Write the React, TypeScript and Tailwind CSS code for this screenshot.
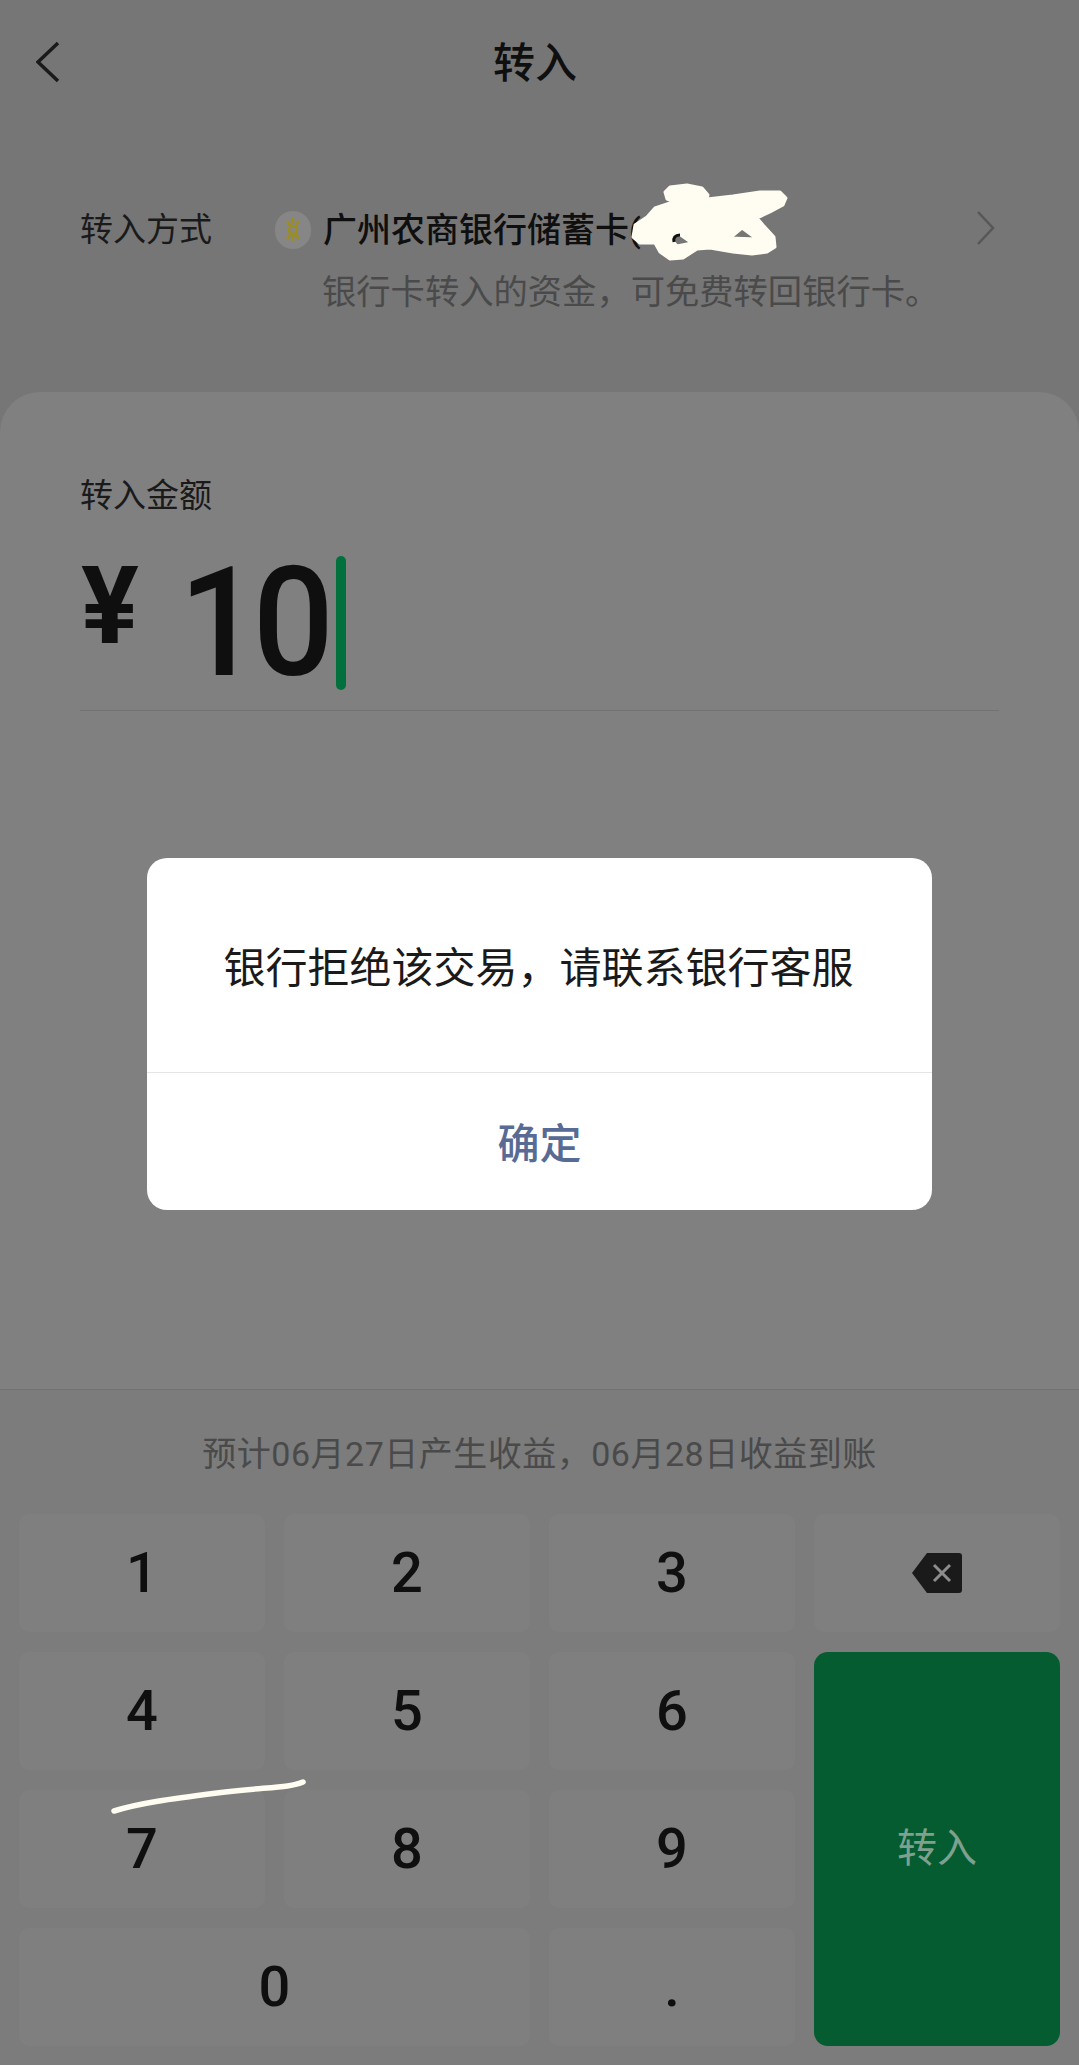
const font = 'font-[Roboto,"Noto_Sans_CJK_SC",sans-serif]';

function Key({ label, className = '' }: { label: string; className?: string }) {
  return (
    <button className={`flex items-center justify-center rounded-[10px] bg-[#7f7f7f] text-[56px] font-medium leading-none text-[#0f0f0f] ${className}`}>
      {label}
    </button>
  );
}

function BankLogo() {
  return (
    <span className="flex h-[38px] w-[36px] shrink-0 items-center justify-center rounded-full bg-[#868686]">
      <svg viewBox="0 0 16 26" className="h-[26px] w-[16px]" fill="none" stroke="#9c8d22" strokeWidth="2.6">
        <circle cx="8" cy="13" r="4" />
        <path d="M8 1v6M8 19v6M2 4l3.5 5M14 4l-3.5 5M2 22l3.5-5M14 22l-3.5-5" />
      </svg>
    </span>
  );
}

function BackspaceIcon() {
  return (
    <svg viewBox="0 0 50 40" className="h-[40px] w-[50px]">
      <path d="M15 0H47a3 3 0 0 1 3 3V37a3 3 0 0 1-3 3H15L0 20Z" fill="#1a1a1a" />
      <path d="M22 12L38 28M38 12L22 28" stroke="#8c8c8c" strokeWidth="3" fill="none" />
    </svg>
  );
}

export default function App() {
  return (
    <div className={`relative flex h-[2065px] w-[1079px] flex-col overflow-hidden bg-[#767676] ${font} text-[#0f0f0f]`}>
      <div className="h-[392px] shrink-0">
        <header className="relative flex h-[128px] items-center justify-center pr-[9px]">
          <svg viewBox="0 0 24 42" className="absolute left-[36px] top-[41px] h-[42px] w-[24px]" fill="none" stroke="#1a1a1a" strokeWidth="3.5">
            <path d="M22 2L2 21L22 40" />
          </svg>
          <h1 className="text-[42px] font-medium leading-[48px]">转入</h1>
        </header>
        <div className="mt-[78px] flex pl-[80px] pr-[84px]">
          <span className="w-[195px] shrink-0 text-[33px] leading-[48px] text-[#1a1a1a]">转入方式</span>
          <div className="flex-1">
            <div className="flex items-center gap-[12px]">
              <BankLogo />
              <span className="text-[34px] font-medium leading-[48px]">广州农商银行储蓄卡(</span>
              <svg viewBox="0 0 19 34" className="mb-[5px] ml-auto h-[34px] w-[19px]" fill="none" stroke="#575757" strokeWidth="2.5">
                <path d="M2 1L17 17L2 33" />
              </svg>
            </div>
            <p className="ml-[47px] mt-[14px] text-[34.3px] leading-[48px] text-[#4a4a4a]">银行卡转入的资金，可免费转回银行卡。</p>
          </div>
        </div>
      </div>

      <main className="flex flex-1 flex-col rounded-t-[40px] bg-[#808080]">
        <div className="flex-1 px-[80px] pt-[80px]">
          <p className="text-[33px] leading-[48px] text-[#1a1a1a]">转入金额</p>
          <div className="mt-[36px] flex h-[134px] items-center">
            <span className="mb-[34px] ml-[1px] text-[108px] font-bold leading-none">¥</span>
            <span className="ml-[40px] origin-left scale-x-[0.94] text-[152px] font-medium leading-none tracking-[-8px]">10</span>
            <span className="h-[134px] w-[10px] rounded-full bg-[#02703d]" />
          </div>
          <div className="mt-[20px] h-px bg-[#727272]" />
        </div>

        <section className="h-[676px] shrink-0 border-t border-[#727272] bg-[#7c7c7c]">
          <p className="mt-[40px] text-center text-[34px] leading-[48px] tracking-[0.5px] text-[#4a4a4a]">预计06月27日产生收益，06月28日收益到账</p>
          <div className="mt-[36px] grid grid-cols-[repeat(4,246px)] grid-rows-[repeat(4,118px)] gap-x-[19px] gap-y-[20px] px-[19px]">
            <Key label="1" />
            <Key label="2" />
            <Key label="3" />
            <button className="flex items-center justify-center rounded-[10px] bg-[#7f7f7f]">
              <BackspaceIcon />
            </button>
            <Key label="4" />
            <Key label="5" />
            <Key label="6" />
            <button className="col-start-4 row-span-3 row-start-2 flex items-center justify-center rounded-[14px] bg-[#045c30] text-[40px] text-[#7fa08f]">
              转入
            </button>
            <Key label="7" />
            <Key label="8" />
            <Key label="9" />
            <Key label="0" className="col-span-2" />
            <Key label="." />
          </div>
        </section>
      </main>

      {/* hand-drawn censor marks on top of the screenshot */}
      <svg className="absolute left-[620px] top-[175px] h-[90px] w-[180px]" viewBox="0 0 180 90">
        <path
          fill="#fffdf2"
          stroke="#fffdf2"
          strokeWidth="3"
          strokeLinejoin="round"
          fillRule="evenodd"
          d="M45 17L50 12L67 10L82 13L88 20L87 24L113 21L140 17L160 17L166 23L163 30L150 37L137 43L143 50L154 62L155 72L147 77L132 79L113 77L90 73L77 74L63 83L50 84L40 77L35 68L20 68L13 62L15 50L27 42L35 33L50 28L65 25L55 27L47 24ZM110 63L122 53L137 64ZM51 64L57 58L62 61L72 68L57 71Z"
        />
        <path d="M60 60C55 60 53 63 54 67" fill="none" stroke="#0f0f0f" strokeWidth="3" />
      </svg>
      <svg className="absolute left-[100px] top-[1770px] h-[60px] w-[220px]" viewBox="0 0 220 60" fill="none" stroke="#fffdf2" strokeWidth="5.5" strokeLinecap="round">
        <path d="M14 41C40 33 70 29 117 23S190 18 203 12" />
      </svg>

      <div className="absolute left-[147px] top-[858px] w-[785px] overflow-hidden rounded-[20px] bg-white">
        <div className="flex h-[215px] items-center justify-center border-b border-[#e5e5e5] pr-[2px] pt-[6px] text-[42px] text-[#1a1a1a]">
          银行拒绝该交易，请联系银行客服
        </div>
        <button className="flex h-[137px] w-full items-center justify-center pt-[5px] text-[42px] font-medium text-[#576b95]">确定</button>
      </div>
    </div>
  );
}
